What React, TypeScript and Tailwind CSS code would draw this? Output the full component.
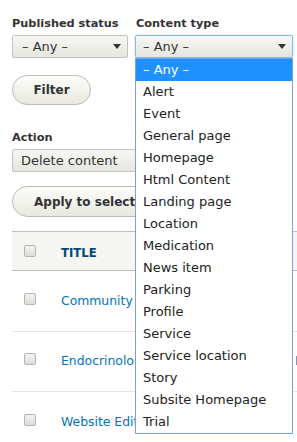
import React from "react";

const contentTypes = [
  "– Any –",
  "Alert",
  "Event",
  "General page",
  "Homepage",
  "Html Content",
  "Landing page",
  "Location",
  "Medication",
  "News item",
  "Parking",
  "Profile",
  "Service",
  "Service location",
  "Story",
  "Subsite Homepage",
  "Trial",
];

const rows = [
  { title: "Community Health Workers", type: "", h: "h-[61px]" },
  { title: "Endocrinology Clinic", type: "Html Content", h: "h-[60px]" },
  { title: "Website Editors Guide", type: "", h: "h-[61px]" },
];

const Arrow = () => (
  <svg width="8" height="5" viewBox="0 0 8 5" className="shrink-0">
    <path d="M0 0 H8 L4 5 Z" fill="#333" />
  </svg>
);

const Checkbox = () => (
  <span className="block w-[12px] h-[12px] rounded-[2px] border border-[#b4b4b0] bg-gradient-to-b from-[#f3f3f1] to-[#dcdcd8]" />
);

const Label = ({ children }: { children: React.ReactNode }) => (
  <div className="text-[11.3px] font-bold leading-[17px] text-[#333] mb-[3px] whitespace-nowrap">{children}</div>
);

export default function App() {
  return (
    <div className="relative w-[297px] h-[442px] overflow-hidden bg-white font-['DejaVu_Sans',sans-serif] text-[#333]">
      <div className="pl-3 pt-[15px]">
        <div className="flex gap-[7px]">
          <div className="w-[116px]">
            <Label>Published status</Label>
            <div className="h-[23px] flex items-center justify-between pl-[9px] pr-[6px] rounded-[2px] border border-[#c4c4bf] bg-gradient-to-b from-[#f6f6f3] to-[#e6e6e0] text-[13px]">
              <span>– Any –</span>
              <Arrow />
            </div>
          </div>
          <div className="w-[158px] relative">
            <Label>
              <span className="pl-px">Content type</span>
            </Label>
            <div className="h-[23px] flex items-center justify-between pl-[7px] pr-[6px] rounded-[2px] border border-[#8fb8ea] shadow-[0_0_2px_#9cc4f2] bg-gradient-to-b from-[#f6f6f3] to-[#e6e6e0] text-[13px]">
              <span>– Any –</span>
              <Arrow />
            </div>
            <ul className="absolute left-0 top-full w-[158px] border border-[#7c9fd6] bg-white z-10 text-[13px]">
              {contentTypes.map((t, i) => (
                <li
                  key={t}
                  className={
                    i === 0
                      ? "h-[22px] leading-[22px] pl-[7px] bg-[#1e90ff] text-white"
                      : "h-[22px] leading-[22px] pl-[7px] text-[#222]"
                  }
                >
                  {t}
                </li>
              ))}
            </ul>
          </div>
        </div>

        <button className="mt-[17px] w-[79px] h-[30px] rounded-full border border-[#bcbcb6] bg-gradient-to-b from-[#fcfcfa] to-[#e8e8e0] text-[12px] font-bold text-[#333]">
          Filter
        </button>

        <div className="mt-[24px]">
          <Label>Action</Label>
          <div className="w-[160px] h-[23px] flex items-center pl-[8px] rounded-[2px] border border-[#c4c4bf] bg-gradient-to-b from-[#f6f6f3] to-[#e6e6e0] text-[13px] whitespace-nowrap">
            Delete content
          </div>
        </div>

        <button className="mt-[14px] h-[31px] pl-[21px] pr-[21px] rounded-full border border-[#bcbcb6] bg-gradient-to-b from-[#fcfcfa] to-[#e8e8e0] text-[12px] font-bold text-[#333] whitespace-nowrap">
          Apply to selected items
        </button>

        <div className="mt-[14px] w-[600px]">
          <div className="flex items-center h-[40px] bg-[#f5f5f2] border-y border-[#bfbfba]">
            <div className="w-[37px] pl-3 flex items-center">
              <Checkbox />
            </div>
            <div className="w-[234px] pl-3 text-[11.7px] font-bold text-[#004875] pt-[5px]">TITLE</div>
          </div>
          {rows.map((r) => (
            <div key={r.title} className={`flex items-center ${r.h} border-b border-[#e6e4df]`}>
              <div className="w-[37px] pl-3 flex items-center pb-[5px]">
                <Checkbox />
              </div>
              <div className="w-[234px] pl-3 text-[12.4px] text-[#0074bd] whitespace-nowrap overflow-hidden">{r.title}</div>
              <div className="pl-3 text-[12.4px] text-[#0074bd] whitespace-nowrap">{r.type}</div>
            </div>
          ))}
        </div>
      </div>
    </div>
  );
}
